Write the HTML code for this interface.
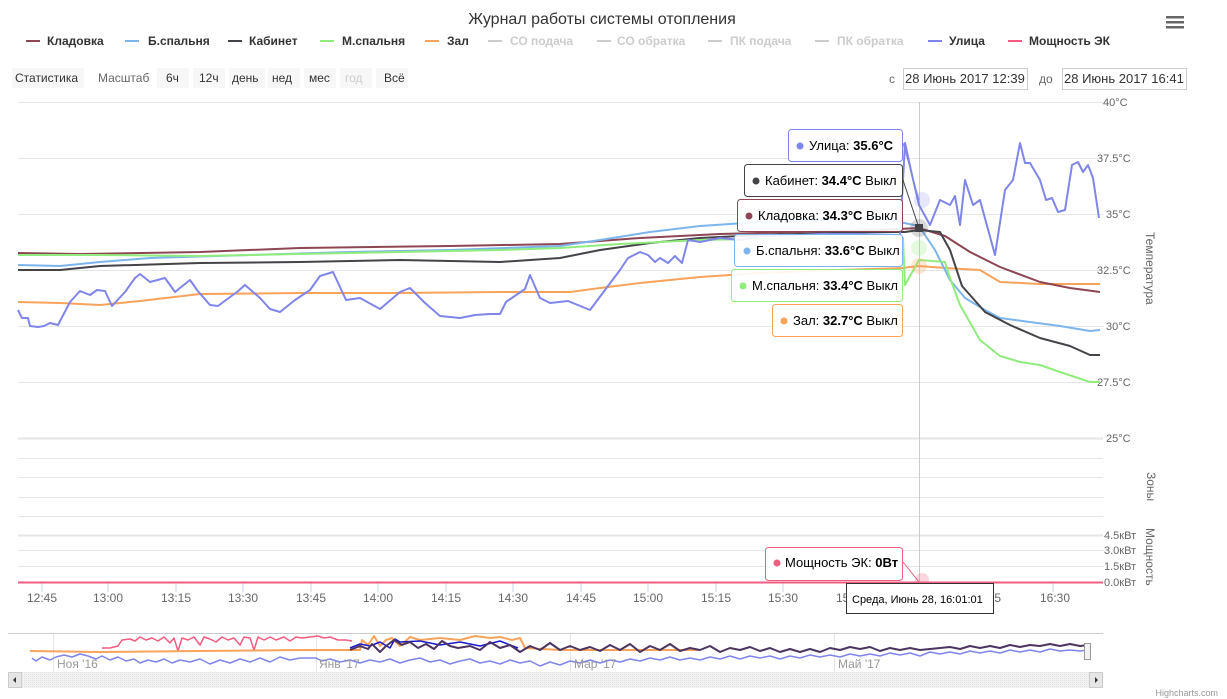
<!DOCTYPE html>
<html><head><meta charset="utf-8"><style>
html,body{margin:0;padding:0;background:#fff;width:1227px;height:699px;overflow:hidden}
svg{display:block;font-family:"Liberation Sans","DejaVu Sans",sans-serif}
</style></head><body>
<svg width="1227" height="699" viewBox="0 0 1227 699" xmlns="http://www.w3.org/2000/svg">
<defs><pattern id="hatch" width="2" height="2" patternUnits="userSpaceOnUse"><rect width="2" height="2" fill="#f2f2f2"/><rect width="1" height="1" fill="#e4e4e4"/></pattern></defs>
<rect width="1227" height="699" fill="#fff"/>
<text x="602" y="24" text-anchor="middle" font-size="16" fill="#333">Журнал работы системы отопления</text>
<g fill="#666"><rect x="1166" y="16" width="18" height="2.5"/><rect x="1166" y="21" width="18" height="2.5"/><rect x="1166" y="26" width="18" height="2.5"/></g>
<g font-size="12" font-weight="bold" fill="#333">
<rect x="26" y="40" width="14" height="2" fill="#8d4653"/><text x="47" y="45">Кладовка</text>
<rect x="125" y="40" width="14" height="2" fill="#7cb5ec"/><text x="148" y="45">Б.спальня</text>
<rect x="228" y="40" width="14" height="2" fill="#434348"/><text x="249" y="45">Кабинет</text>
<rect x="320" y="40" width="14" height="2" fill="#90ed7d"/><text x="342" y="45">М.спальня</text>
<rect x="425" y="40" width="14" height="2" fill="#f7a35c"/><text x="447" y="45">Зал</text>
<g fill="#ccc"><rect x="488" y="40" width="14" height="2"/><text x="510" y="45">СО подача</text>
<rect x="597" y="40" width="14" height="2"/><text x="617" y="45">СО обратка</text>
<rect x="708" y="40" width="14" height="2"/><text x="730" y="45">ПК подача</text>
<rect x="815" y="40" width="14" height="2"/><text x="837" y="45">ПК обратка</text></g>
<rect x="928" y="40" width="14" height="2" fill="#8085e9"/><text x="949" y="45">Улица</text>
<rect x="1008" y="40" width="14" height="2" fill="#f15c80"/><text x="1029" y="45">Мощность ЭК</text>
</g>
<g font-size="12" fill="#333">
<rect x="12" y="68" width="72" height="20" fill="#f7f7f7"/><text x="15" y="82">Статистика</text>
<text x="98" y="82" fill="#666">Масштаб</text>
<rect x="157" y="68" width="32" height="20" fill="#f7f7f7"/><text x="166" y="82">6ч</text>
<rect x="193" y="68" width="32" height="20" fill="#f7f7f7"/><text x="199" y="82">12ч</text>
<rect x="229" y="68" width="36" height="20" fill="#f7f7f7"/><text x="232" y="82">день</text>
<rect x="268" y="68" width="32" height="20" fill="#f7f7f7"/><text x="272" y="82">нед</text>
<rect x="304" y="68" width="32" height="20" fill="#f7f7f7"/><text x="309" y="82">мес</text>
<rect x="340" y="68" width="32" height="20" fill="#f7f7f7"/><text x="345" y="82" fill="#ccc">год</text>
<rect x="376" y="68" width="32" height="20" fill="#f7f7f7"/><text x="384" y="82">Всё</text>
<text x="889" y="83" fill="#666">с</text>
<rect x="903.5" y="68.5" width="124" height="21" fill="#fff" stroke="#ccc"/><text x="905" y="83" font-size="13">28 Июнь 2017 12:39</text>
<text x="1039" y="83" fill="#666">до</text>
<rect x="1062.5" y="68.5" width="124" height="21" fill="#fff" stroke="#ccc"/><text x="1064" y="83" font-size="13">28 Июнь 2017 16:41</text>
</g>
<g stroke="#e6e6e6" stroke-width="1">
<line x1="18" y1="102.5" x2="1103" y2="102.5"/><line x1="18" y1="158.5" x2="1103" y2="158.5"/>
<line x1="18" y1="214.5" x2="1103" y2="214.5"/><line x1="18" y1="270.5" x2="1103" y2="270.5"/>
<line x1="18" y1="326.5" x2="1103" y2="326.5"/><line x1="18" y1="382.5" x2="1103" y2="382.5"/>
<line x1="18" y1="438.5" x2="1103" y2="438.5" stroke-width="2"/>
<line x1="18" y1="458.5" x2="1103" y2="458.5"/><line x1="18" y1="477.5" x2="1103" y2="477.5"/>
<line x1="18" y1="497.5" x2="1103" y2="497.5"/><line x1="18" y1="516.5" x2="1103" y2="516.5"/>
<line x1="18" y1="535.5" x2="1103" y2="535.5" stroke-width="2"/>
<line x1="18" y1="550.5" x2="1103" y2="550.5"/><line x1="18" y1="566.5" x2="1103" y2="566.5"/>
</g>
<g font-size="11" fill="#666">
<text x="1103" y="106">40°C</text><text x="1097" y="162">37.5°C</text><text x="1106" y="218">35°C</text>
<text x="1097" y="274">32.5°C</text><text x="1106" y="330">30°C</text><text x="1097" y="386">27.5°C</text><text x="1106" y="442">25°C</text>
<text x="1104" y="539">4.5кВт</text><text x="1104" y="554">3.0кВт</text><text x="1104" y="570">1.5кВт</text><text x="1104" y="586">0.0кВт</text>
</g>
<g font-size="12" fill="#666">
<text transform="translate(1146,232) rotate(90)">Температура</text>
<text transform="translate(1147,472) rotate(90)">Зоны</text>
<text transform="translate(1146,528) rotate(90)">Мощность</text>
</g>
<g stroke="#ccd6eb">
<line x1="42" y1="583" x2="42" y2="592"/><line x1="108" y1="583" x2="108" y2="592"/><line x1="176" y1="583" x2="176" y2="592"/><line x1="243" y1="583" x2="243" y2="592"/><line x1="311" y1="583" x2="311" y2="592"/><line x1="378" y1="583" x2="378" y2="592"/><line x1="446" y1="583" x2="446" y2="592"/><line x1="513" y1="583" x2="513" y2="592"/><line x1="581" y1="583" x2="581" y2="592"/><line x1="648" y1="583" x2="648" y2="592"/><line x1="716" y1="583" x2="716" y2="592"/><line x1="783" y1="583" x2="783" y2="592"/><line x1="851" y1="583" x2="851" y2="592"/><line x1="918" y1="583" x2="918" y2="592"/><line x1="986" y1="583" x2="986" y2="592"/><line x1="1053" y1="583" x2="1053" y2="592"/>
</g>
<g font-size="12" fill="#666" text-anchor="middle">
<text x="42" y="602">12:45</text><text x="108" y="602">13:00</text><text x="176" y="602">13:15</text><text x="243" y="602">13:30</text><text x="311" y="602">13:45</text><text x="378" y="602">14:00</text><text x="446" y="602">14:15</text><text x="513" y="602">14:30</text><text x="581" y="602">14:45</text><text x="648" y="602">15:00</text><text x="716" y="602">15:15</text><text x="783" y="602">15:30</text><text x="851" y="602">15:45</text><text x="986" y="602">16:15</text><text x="1055" y="602">16:30</text>
</g>
<line x1="919.5" y1="102" x2="919.5" y2="582" stroke="#ccc"/>
<g fill="none" stroke-width="2" stroke-linejoin="round">
<polyline stroke="#f7a35c" points="18,302 60,303 100,305 140,301 200,294 300,293 400,293 500,292 570,292 600,288 640,283 700,277 760,273 840,270 903,268 910,267 919,266 945,268 980,270 1000,282 1040,284 1100,284"/>
<polyline stroke="#8d4653" points="18,253 80,254 200,252 300,248 450,246 560,244 640,238 720,234 800,232 880,230 919,228 945,236 970,252 1000,267 1040,282 1070,288 1100,292"/>
<polyline stroke="#7cb5ec" points="18,265 60,266 100,262 150,258 250,255 350,252 450,250 560,246 600,240 650,232 700,226 760,222 880,218 919,226 935,250 950,280 965,298 985,310 1000,318 1030,322 1060,326 1090,331 1100,330"/>
<polyline stroke="#434348" points="18,270 60,270 100,266 200,263 300,262 400,260 500,262 560,258 600,250 650,243 700,238 760,235 870,232 905,232 919,230 940,232 950,250 962,286 985,312 1010,325 1040,338 1070,346 1090,355 1100,355"/>
<polyline stroke="#90ed7d" points="18,255 100,255 200,256 300,254 400,252 500,250 560,248 620,244 700,240 800,238 903,238 905,285 919,260 945,262 950,278 960,305 980,340 1000,356 1020,362 1040,365 1060,372 1090,382 1100,382"/>
<polyline stroke="#8085e9" points="18,310 22,318 28,318 30,326 38,327 44,326 50,323 58,325 70,302 80,291 90,295 97,290 105,291 112,306 125,292 135,278 140,274 150,282 165,278 175,292 180,288 190,280 197,290 210,305 218,306 226,300 237,292 245,285 260,298 270,309 280,312 295,300 310,290 320,276 333,272 346,300 360,298 380,309 400,292 410,288 425,303 440,316 460,318 475,315 490,314 500,314 506,302 525,289 530,275 540,298 550,303 568,301 590,310 605,290 620,270 628,258 640,252 648,255 655,262 660,258 668,263 675,256 682,263 688,240 700,242 720,238 740,240 760,236 780,236 820,234 860,234 900,235 905,143 912,175 919,205 930,225 940,200 950,205 955,196 960,225 965,180 973,205 980,200 995,255 1005,190 1013,180 1020,143 1025,163 1030,163 1040,180 1046,200 1052,198 1058,212 1065,210 1072,165 1078,162 1083,172 1088,165 1093,178 1099,218"/>
</g>
<line x1="18" y1="582.5" x2="1103" y2="582.5" stroke="#f15c80" stroke-width="2"/>
<circle cx="919" cy="228" r="9" fill="#434348" opacity="0.2"/><rect x="915" y="224" width="8" height="8" fill="#434348"/>
<circle cx="922" cy="200" r="8" fill="#8085e9" opacity="0.2"/>
<circle cx="919" cy="248" r="8" fill="#90ed7d" opacity="0.25"/>
<circle cx="919" cy="266" r="8" fill="#f7a35c" opacity="0.25"/>
<circle cx="922" cy="580" r="7" fill="#f15c80" opacity="0.25"/>
<g font-size="13" fill="#000">
<polyline points="903,143 919,200" stroke="#8085e9" fill="none"/>
<rect x="788.5" y="129.5" width="114" height="32" rx="3" fill="#fff" fill-opacity="0.9" stroke="#8085e9"/>
<circle cx="800" cy="146" r="3.5" fill="#8085e9"/><text x="809" y="150">Улица: <tspan font-weight="bold">35.6°C</tspan></text>
<polyline points="903,180 919,228" stroke="#434348" fill="none"/>
<rect x="744.5" y="164.5" width="158" height="32" rx="3" fill="#fff" fill-opacity="0.9" stroke="#434348"/>
<circle cx="756" cy="181" r="3.5" fill="#434348"/><text x="765" y="185">Кабинет: <tspan font-weight="bold">34.4°C</tspan> Выкл</text>
<rect x="737.5" y="199.5" width="165" height="32" rx="3" fill="#fff" fill-opacity="0.9" stroke="#8d4653"/>
<circle cx="749" cy="216" r="3.5" fill="#8d4653"/><text x="758" y="220">Кладовка: <tspan font-weight="bold">34.3°C</tspan> Выкл</text>
<rect x="734.5" y="234.5" width="168" height="32" rx="3" fill="#fff" fill-opacity="0.9" stroke="#7cb5ec"/>
<circle cx="747" cy="251" r="3.5" fill="#7cb5ec"/><text x="756" y="255">Б.спальня: <tspan font-weight="bold">33.6°C</tspan> Выкл</text>
<rect x="731.5" y="269.5" width="171" height="32" rx="3" fill="#fff" fill-opacity="0.9" stroke="#90ed7d"/>
<circle cx="743" cy="286" r="3.5" fill="#90ed7d"/><text x="752" y="290">М.спальня: <tspan font-weight="bold">33.4°C</tspan> Выкл</text>
<rect x="772.5" y="304.5" width="130" height="32" rx="3" fill="#fff" fill-opacity="0.9" stroke="#f7a35c"/>
<circle cx="784" cy="321" r="3.5" fill="#f7a35c"/><text x="793" y="325">Зал: <tspan font-weight="bold">32.7°C</tspan> Выкл</text>
<polyline points="903,562 919,582" stroke="#f15c80" fill="none"/>
<rect x="765.5" y="547.5" width="137" height="33" rx="3" fill="#fff" stroke="#f15c80"/>
<circle cx="777" cy="563" r="3.5" fill="#f15c80"/><text x="785" y="567">Мощность ЭК: <tspan font-weight="bold">0Вт</tspan></text>
<rect x="846.5" y="583.5" width="147" height="30" fill="#fff" stroke="#333"/>
<text x="852" y="603" font-size="11">Среда, Июнь 28, 16:01:01</text>
</g>
<line x1="8" y1="633.5" x2="1103" y2="633.5" stroke="#ccc"/>
<g stroke="#e6e6e6"><line x1="53.5" y1="634" x2="53.5" y2="672"/><line x1="316.5" y1="634" x2="316.5" y2="672"/><line x1="570.5" y1="634" x2="570.5" y2="672"/><line x1="834.5" y1="634" x2="834.5" y2="672"/></g>
<g fill="none" stroke-width="1.5" stroke-linejoin="round">
<polyline stroke="#f15c80" points="102,648 110,648 118,646 122,640 130,639 135,641 140,637 146,640 152,638 158,641 164,637 170,643 174,638 178,651 182,638 188,640 194,637 200,645 204,637 210,639 216,642 222,637 228,640 234,638 240,645 244,637 250,638 254,650 258,637 264,640 270,637 276,640 284,637 290,641 296,637 302,638 310,637 318,636 324,638 330,637 338,640 346,640 352,641"/>
<polyline stroke="#f7a35c" stroke-width="2" points="30,651 100,652 200,651 300,650 360,650 362,640 368,645 374,636 380,646 386,640 392,638 400,646 410,637 420,640 440,638 460,640 475,636 490,638 500,637 512,640 520,638 525,648 560,650 640,650 700,650"/>
<polyline stroke="#1a1acc" stroke-width="1.5" points="350,648 360,644 370,646 380,642 390,648 395,639 400,642 420,641 440,645 460,642 480,646 500,641 510,645 518,648"/>
<polyline stroke="#4b3560" stroke-width="2" points="350,650 360,646 368,649 372,644 380,652 386,646 394,640 402,645 410,642 418,648 426,644 434,649 442,641 450,646 458,648 470,646 480,650 490,642 500,648 510,645 520,652 530,646 540,650 550,643 560,650 570,646 580,650 590,647 600,651 610,645 620,650 630,644 640,652 650,646 660,650 670,644 680,651 690,648 700,650 710,646 720,652 730,648 740,650 750,647 760,651 770,648 780,652 790,649 800,652 810,649 820,652 830,648 840,650 850,647 860,649 870,647 880,651 890,648 900,650 910,648 920,650 930,649 940,648 950,647 960,649 970,646 980,648 990,646 1000,648 1010,645 1020,647 1030,645 1040,646 1050,644 1060,646 1070,644 1080,646 1088,645"/>
<polyline stroke="#8085e9" points="32,658 36,661 42,657 50,660 56,657 64,655 72,657 80,654 88,656 96,659 102,656 110,660 118,657 126,661 134,659 140,663 148,660 156,662 164,659 172,663 180,660 190,662 200,659 210,664 220,660 230,663 240,659 250,662 260,658 270,662 280,657 290,660 300,658 316,658 322,661 330,659 340,662 350,660 360,663 370,660 380,662 390,659 400,663 410,660 420,658 430,662 440,660 450,664 460,661 470,659 480,663 490,661 500,664 510,660 520,663 530,661 540,666 550,662 560,665 570,661 580,663 590,660 600,663 610,660 620,662 630,659 640,661 650,658 660,660 670,657 680,660 690,658 700,660 710,657 720,659 730,656 740,659 750,656 760,658 770,656 780,659 790,656 800,658 810,655 820,657 830,655 840,657 850,654 860,656 870,654 880,656 890,653 900,655 910,653 920,656 930,652 940,654 950,652 960,654 970,651 980,653 990,651 1000,653 1010,650 1020,652 1030,650 1040,652 1050,649 1060,651 1070,650 1080,651 1088,650"/>
</g>
<g font-size="12" fill="#999"><text x="57" y="668">Ноя '16</text><text x="319" y="668">Янв '17</text><text x="574" y="668">Мар '17</text><text x="838" y="668">Май '17</text></g>
<rect x="1084.5" y="643.5" width="6" height="16" fill="#f2f2f2" stroke="#999"/>
<rect x="8" y="672" width="1095" height="16" fill="url(#hatch)"/>
<rect x="8.5" y="672.5" width="13" height="15" fill="#e6e6e6" stroke="#ccc"/><rect x="1089.5" y="672.5" width="13" height="15" fill="#e6e6e6" stroke="#ccc"/>
<path d="M13 680 l3 -3 v6z M1098 680 l-3 -3 v6z" fill="#333"/>
<text x="1218" y="696" text-anchor="end" font-size="9" fill="#999">Highcharts.com</text>
</svg>
</body></html>
